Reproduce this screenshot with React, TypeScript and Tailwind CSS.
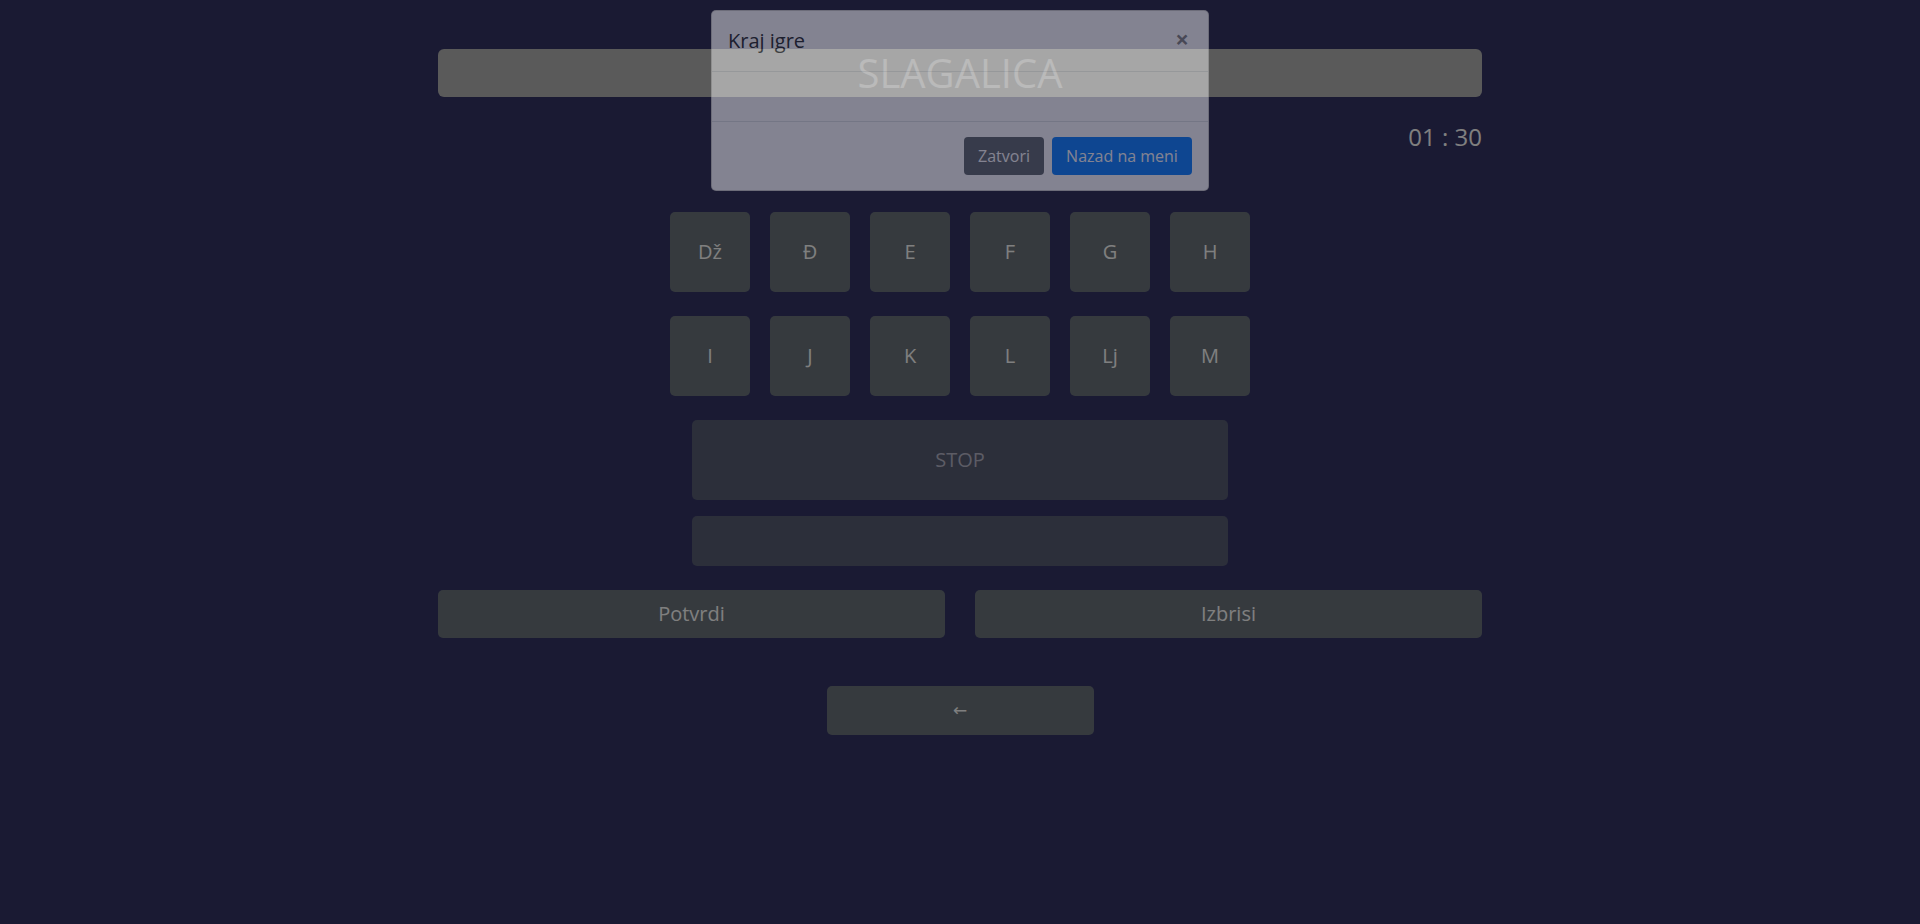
import React from "react";

const row1 = ["Dž", "Đ", "E", "F", "G", "H"];
const row2 = ["I", "J", "K", "L", "Lj", "M"];

function LetterRow({ letters }: { letters: string[] }) {
  return (
    <div className="flex justify-center gap-5">
      {letters.map((l) => (
        <button
          key={l}
          className="w-20 h-20 rounded-[5px] bg-[#6c757d] text-white text-[20px] leading-none"
        >
          {l}
        </button>
      ))}
    </div>
  );
}

export default function App() {
  return (
    <div className="relative min-h-[924px] bg-[#343466] font-['Open_Sans',sans-serif] text-white">
      {/* game board */}
      <div className="w-[1044px] mx-auto pt-[49px]">
        <h1 className="h-12 rounded-[6px] bg-[#b4b4b4] text-center text-[40px] leading-[48px] text-white">
          SLAGALICA
        </h1>
        <div className="mt-[22px] flex justify-end text-[24px] leading-[36px]">
          01 : 30
        </div>

        <div className="mt-[57px] flex flex-col gap-6">
          <LetterRow letters={row1} />
          <LetterRow letters={row2} />
          <button
            disabled
            className="mx-auto w-[536px] h-20 rounded-[5px] bg-[#585e75] text-[20px] text-[#b8b8ca]"
          >
            STOP
          </button>
        </div>

        <input
          disabled
          className="block mx-auto mt-4 w-[536px] h-[50px] rounded-[5px] bg-[#585e75]"
        />

        <div className="mt-6 grid grid-cols-2 gap-[30px]">
          <button className="h-12 rounded-[5px] bg-[#6c757d] text-[20px]">
            Potvrdi
          </button>
          <button className="h-12 rounded-[5px] bg-[#6c757d] text-[20px]">
            Izbrisi
          </button>
        </div>

        <div className="mt-12 flex justify-center">
          <button className="w-[267px] h-[49px] rounded-[5px] bg-[#6c757d] text-[17px] font-['DejaVu_Sans',sans-serif]">
            ←
          </button>
        </div>
      </div>

      {/* modal backdrop */}
      <div className="absolute inset-0 bg-black/50" />

      {/* modal */}
      <div className="absolute top-[10px] left-1/2 -translate-x-1/2 w-[498px] opacity-[0.46]">
        <div className="rounded-[5px] border border-black/20 bg-white text-[#212529]">
          <div className="flex items-start justify-between px-4 pt-[15px] pb-[15px] border-b border-[#dee2e6]">
            <h5 className="text-[20px] leading-[30px]">Kraj igre</h5>
            <span className="-mt-[2px] mr-[3px] text-[24px] font-bold leading-[30px] text-black/50">
              ×
            </span>
          </div>
          <div className="h-[49px]" />
          <div className="flex justify-end items-center gap-2 px-4 pt-[15px] pb-[15px] border-t border-[#dee2e6]">
            <button className="w-20 h-[38px] rounded-[4px] bg-[#5a6268] text-white text-[16px]">
              Zatvori
            </button>
            <button className="w-[140px] h-[38px] rounded-[4px] bg-[#007bff] text-white text-[16px]">
              Nazad na meni
            </button>
          </div>
        </div>
      </div>
    </div>
  );
}
